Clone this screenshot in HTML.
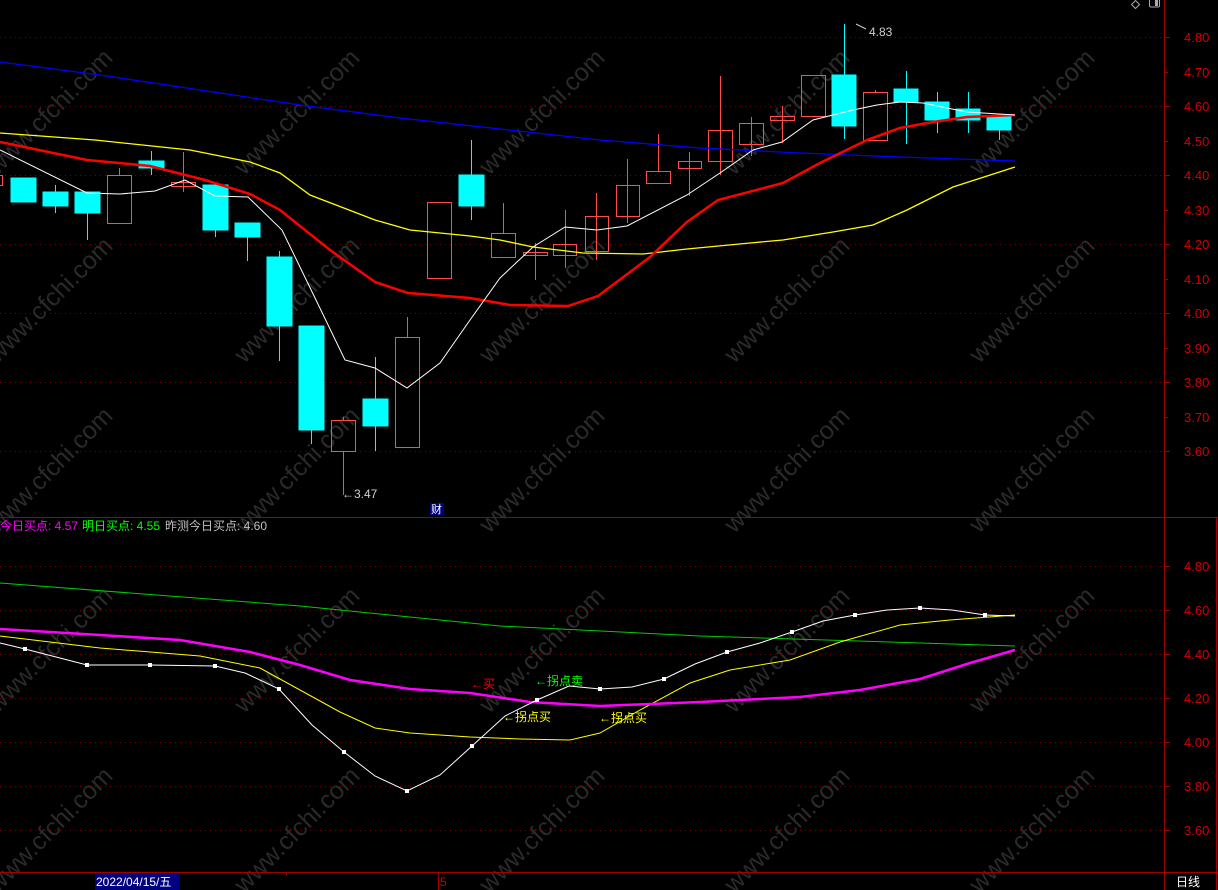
<!DOCTYPE html>
<html><head><meta charset="utf-8"><style>
html,body{margin:0;padding:0;background:#000;width:1218px;height:890px;overflow:hidden}
svg{display:block}
text{font-family:"Liberation Sans","Noto Sans CJK SC",sans-serif}
</style></head><body>
<svg width="1218" height="890" viewBox="0 0 1218 890" xmlns="http://www.w3.org/2000/svg">
<rect width="1218" height="890" fill="#000"/>
<!-- watermarks -->
<g fill="#2a2a2a" font-size="25" font-family="Liberation Sans,sans-serif">
<text transform="translate(50,112) rotate(-45)" text-anchor="middle" dy="8">www.cfchi.com</text>
<text transform="translate(297,112) rotate(-45)" text-anchor="middle" dy="8">www.cfchi.com</text>
<text transform="translate(542,112) rotate(-45)" text-anchor="middle" dy="8">www.cfchi.com</text>
<text transform="translate(787,112) rotate(-45)" text-anchor="middle" dy="8">www.cfchi.com</text>
<text transform="translate(1032,112) rotate(-45)" text-anchor="middle" dy="8">www.cfchi.com</text>
<text transform="translate(50,300) rotate(-45)" text-anchor="middle" dy="8">www.cfchi.com</text>
<text transform="translate(297,300) rotate(-45)" text-anchor="middle" dy="8">www.cfchi.com</text>
<text transform="translate(542,300) rotate(-45)" text-anchor="middle" dy="8">www.cfchi.com</text>
<text transform="translate(787,300) rotate(-45)" text-anchor="middle" dy="8">www.cfchi.com</text>
<text transform="translate(1032,300) rotate(-45)" text-anchor="middle" dy="8">www.cfchi.com</text>
<text transform="translate(50,470) rotate(-45)" text-anchor="middle" dy="8">www.cfchi.com</text>
<text transform="translate(297,470) rotate(-45)" text-anchor="middle" dy="8">www.cfchi.com</text>
<text transform="translate(542,470) rotate(-45)" text-anchor="middle" dy="8">www.cfchi.com</text>
<text transform="translate(787,470) rotate(-45)" text-anchor="middle" dy="8">www.cfchi.com</text>
<text transform="translate(1032,470) rotate(-45)" text-anchor="middle" dy="8">www.cfchi.com</text>
<text transform="translate(50,650) rotate(-45)" text-anchor="middle" dy="8">www.cfchi.com</text>
<text transform="translate(297,650) rotate(-45)" text-anchor="middle" dy="8">www.cfchi.com</text>
<text transform="translate(542,650) rotate(-45)" text-anchor="middle" dy="8">www.cfchi.com</text>
<text transform="translate(787,650) rotate(-45)" text-anchor="middle" dy="8">www.cfchi.com</text>
<text transform="translate(1032,650) rotate(-45)" text-anchor="middle" dy="8">www.cfchi.com</text>
<text transform="translate(50,830) rotate(-45)" text-anchor="middle" dy="8">www.cfchi.com</text>
<text transform="translate(297,830) rotate(-45)" text-anchor="middle" dy="8">www.cfchi.com</text>
<text transform="translate(542,830) rotate(-45)" text-anchor="middle" dy="8">www.cfchi.com</text>
<text transform="translate(787,830) rotate(-45)" text-anchor="middle" dy="8">www.cfchi.com</text>
<text transform="translate(1032,830) rotate(-45)" text-anchor="middle" dy="8">www.cfchi.com</text>
</g>
<!-- grid -->
<g stroke="#7a0000" stroke-width="1" stroke-dasharray="1,4">
<line x1="0" y1="37.5" x2="1162" y2="37.5"/><line x1="0" y1="106.5" x2="1162" y2="106.5"/>
<line x1="0" y1="175.5" x2="1162" y2="175.5"/><line x1="0" y1="244.5" x2="1162" y2="244.5"/>
<line x1="0" y1="313.5" x2="1162" y2="313.5"/><line x1="0" y1="382.5" x2="1162" y2="382.5"/>
<line x1="0" y1="451.5" x2="1162" y2="451.5"/>
<line x1="0" y1="566.5" x2="1162" y2="566.5"/><line x1="0" y1="610.5" x2="1162" y2="610.5"/>
<line x1="0" y1="654.5" x2="1162" y2="654.5"/><line x1="0" y1="698.5" x2="1162" y2="698.5"/>
<line x1="0" y1="742.5" x2="1162" y2="742.5"/><line x1="0" y1="786.5" x2="1162" y2="786.5"/>
<line x1="0" y1="830.5" x2="1162" y2="830.5"/>
</g>
<!-- frame -->
<g stroke="#a00000" stroke-width="1">
<line x1="1164.5" y1="0" x2="1164.5" y2="890"/>
<line x1="0" y1="517.5" x2="1218" y2="517.5"/>
<line x1="0" y1="872.5" x2="1218" y2="872.5"/>
<line x1="1216.5" y1="517" x2="1216.5" y2="890"/>
</g>
<g stroke="#a00000">
<line x1="1164" y1="37.5" x2="1170" y2="37.5"/><line x1="1164" y1="72.5" x2="1168" y2="72.5"/>
<line x1="1164" y1="106.5" x2="1170" y2="106.5"/><line x1="1164" y1="141.5" x2="1168" y2="141.5"/>
<line x1="1164" y1="175.5" x2="1170" y2="175.5"/><line x1="1164" y1="210.5" x2="1168" y2="210.5"/>
<line x1="1164" y1="244.5" x2="1170" y2="244.5"/><line x1="1164" y1="279.5" x2="1168" y2="279.5"/>
<line x1="1164" y1="313.5" x2="1170" y2="313.5"/><line x1="1164" y1="348.5" x2="1168" y2="348.5"/>
<line x1="1164" y1="382.5" x2="1170" y2="382.5"/><line x1="1164" y1="417.5" x2="1168" y2="417.5"/>
<line x1="1164" y1="451.5" x2="1170" y2="451.5"/>
<line x1="1164" y1="566.5" x2="1170" y2="566.5"/><line x1="1164" y1="610.5" x2="1170" y2="610.5"/>
<line x1="1164" y1="654.5" x2="1170" y2="654.5"/><line x1="1164" y1="698.5" x2="1170" y2="698.5"/>
<line x1="1164" y1="742.5" x2="1170" y2="742.5"/><line x1="1164" y1="786.5" x2="1170" y2="786.5"/>
<line x1="1164" y1="830.5" x2="1170" y2="830.5"/>
</g>
<g fill="#d00000" font-size="13">
<text x="1184" y="42">4.80</text><text x="1184" y="77">4.70</text><text x="1184" y="111">4.60</text>
<text x="1184" y="146">4.50</text><text x="1184" y="180">4.40</text><text x="1184" y="215">4.30</text>
<text x="1184" y="249">4.20</text><text x="1184" y="284">4.10</text><text x="1184" y="318">4.00</text>
<text x="1184" y="353">3.90</text><text x="1184" y="387">3.80</text><text x="1184" y="422">3.70</text>
<text x="1184" y="456">3.60</text>
<text x="1184" y="571">4.80</text><text x="1184" y="615">4.60</text><text x="1184" y="659">4.40</text>
<text x="1184" y="703">4.20</text><text x="1184" y="747">4.00</text><text x="1184" y="791">3.80</text>
<text x="1184" y="835">3.60</text>
</g>
<!-- top right icons -->
<path d="M1135.5 0.5 L1139.5 4.5 L1135.5 8.5 L1131.5 4.5 Z" fill="none" stroke="#aaa"/>
<rect x="1149.5" y="-2" width="10" height="9" rx="1.5" fill="none" stroke="#aaa"/>
<rect x="1155" y="0" width="3" height="6" fill="#aaa"/>

<!-- candles -->
<g stroke-width="1">
<g fill="#00ffff" stroke="#00ffff">
<rect x="11" y="178" width="25" height="24"/>
<line x1="55.5" y1="185" x2="55.5" y2="213"/><rect x="43" y="192" width="25" height="14"/>
<line x1="87.5" y1="192" x2="87.5" y2="240"/><rect x="75" y="192" width="25" height="21"/>
<line x1="151.5" y1="151" x2="151.5" y2="175"/><rect x="139" y="161" width="25" height="7"/>
<line x1="215.5" y1="185" x2="215.5" y2="237"/><rect x="203" y="185" width="25" height="45"/>
<line x1="247.5" y1="223" x2="247.5" y2="261"/><rect x="235" y="223" width="25" height="14"/>
<line x1="279.5" y1="251" x2="279.5" y2="361"/><rect x="267" y="257" width="25" height="69"/>
<line x1="311.5" y1="326" x2="311.5" y2="444"/><rect x="299" y="326" width="25" height="104"/>
<line x1="375.5" y1="357" x2="375.5" y2="451"/><rect x="363" y="399" width="25" height="27"/>
<line x1="471.5" y1="140" x2="471.5" y2="220"/><rect x="459" y="175" width="25" height="31"/>
<line x1="844.5" y1="24" x2="844.5" y2="139"/><rect x="832" y="75" width="24" height="51"/>
<line x1="906.5" y1="71" x2="906.5" y2="144"/><rect x="894" y="89" width="24" height="13"/>
<line x1="937.5" y1="92" x2="937.5" y2="133"/><rect x="925" y="102" width="24" height="18"/>
<line x1="968.5" y1="92" x2="968.5" y2="133"/><rect x="956" y="109" width="24" height="11"/>
<line x1="999.5" y1="116" x2="999.5" y2="140"/><rect x="987" y="116" width="24" height="14"/>
</g>
<g fill="none" stroke="#ff4d4d">
<rect x="-5.5" y="175.5" width="8" height="10"/>
<line x1="119.5" y1="168" x2="119.5" y2="175"/><rect x="107.5" y="175.5" width="24" height="48"/>
<line x1="183.5" y1="152" x2="183.5" y2="192"/><rect x="171.5" y="182.5" width="24" height="4"/>
<line x1="343.5" y1="417" x2="343.5" y2="420"/><line x1="343.5" y1="451" x2="343.5" y2="495"/><rect x="331.5" y="420.5" width="24" height="31"/>
<line x1="407.5" y1="317" x2="407.5" y2="337"/><rect x="395.5" y="337.5" width="24" height="110"/>
<rect x="427.5" y="202.5" width="24" height="76"/>
<line x1="503.5" y1="203" x2="503.5" y2="233"/><rect x="491.5" y="233.5" width="24" height="24"/>
<line x1="535.5" y1="243" x2="535.5" y2="280"/><rect x="523.5" y="252.5" width="24" height="3"/>
<line x1="565.5" y1="210" x2="565.5" y2="268"/><rect x="553.5" y="244.5" width="23" height="11"/>
<line x1="596.5" y1="193" x2="596.5" y2="260"/><rect x="585.5" y="216.5" width="23" height="35"/>
<line x1="627.5" y1="159" x2="627.5" y2="223"/><rect x="616.5" y="185.5" width="23" height="31"/>
<line x1="658.5" y1="134" x2="658.5" y2="171"/><rect x="646.5" y="171.5" width="24" height="12"/>
<line x1="689.5" y1="152" x2="689.5" y2="196"/><rect x="678.5" y="161.5" width="23" height="7"/>
<line x1="720.5" y1="76" x2="720.5" y2="175"/><rect x="708.5" y="130.5" width="24" height="31"/>
<line x1="751.5" y1="117" x2="751.5" y2="156"/><rect x="739.5" y="123.5" width="24" height="21"/>
<line x1="782.5" y1="106" x2="782.5" y2="143"/><rect x="770.5" y="116.5" width="24" height="4"/>
<rect x="801.5" y="75.5" width="24" height="41"/>
<line x1="875.5" y1="90" x2="875.5" y2="92"/><rect x="863.5" y="92.5" width="24" height="48"/>
</g>
</g>
<polyline fill="none" stroke="#0000ff" stroke-width="1.3" points="0,62 100,75 200,90 300,105 400,118 500,129 600,140 700,148 800,153 900,157 1015,161"/>
<polyline fill="none" stroke="#ffff00" stroke-width="1.3" points="0,133 95,140 190,150 250,162 280,173 310,195 375,220 410,230 470,236 500,240 533,247 583,253 643,254 687,249 750,243 783,240 833,232 873,225 907,210 953,187 1015,167"/>
<polyline fill="none" stroke="#ff0000" stroke-width="2.5" points="0,142 87,160 150,166 205,180 250,194 280,210 330,250 375,282 408,293 470,298 510,305 568,306 598,296 650,257 687,222 718,200 783,183 820,163 867,140 900,128 933,122 967,117 1015,115"/>
<polyline fill="none" stroke="#ffffff" stroke-width="1" points="0,150 87,193 120,194 155,191 185,180 215,196 248,197 282,230 316,300 345,360 375,368 407,388 440,363 470,320 500,278 533,247 565,227 597,230 627,226 687,195 720,173 753,150 782,142 813,120 853,110 877,105 900,102 923,103 947,108 967,112 1015,115"/>
<line x1="856" y1="24" x2="866" y2="29" stroke="#ccc"/>
<text x="869" y="36" fill="#d0d0d0" font-size="12">4.83</text>
<text x="342" y="498" fill="#d0d0d0" font-size="12">←3.47</text>
<rect x="430" y="503" width="14" height="12" fill="#000080"/>
<text x="431" y="513" fill="#fff" font-size="11">财</text>
<g font-size="12">
<text x="0" y="530" fill="#ff00ff">今日买点: 4.57</text>
<text x="82" y="530" fill="#00ff00">明日买点: 4.55</text>
<text x="165" y="530" fill="#c0c0c0">昨测今日买点: 4.60</text>
</g>
<polyline fill="none" stroke="#00cc00" stroke-width="1" points="0,583 300,606 500,626 700,636 1015,646"/>
<polyline fill="none" stroke="#ffff00" stroke-width="1" points="0,636 100,648 200,656 260,668 300,690 340,712 375,728 410,733 470,737 520,739 570,740 600,733 640,710 690,683 730,670 790,660 840,642 900,625 950,620 1015,615"/>
<polyline fill="none" stroke="#ff00ff" stroke-width="2.5" points="0,629 100,635 180,640 250,652 300,665 350,680 410,689 470,693 530,702 600,706 700,702 800,697 860,690 920,679 970,663 1015,650"/>
<polyline fill="none" stroke="#ffffff" stroke-width="1" points="0,643 25,649 87,665 150,665 215,666 245,673 279,689 312,725 344,752 375,776 407,791 440,775 472,746 505,716 537,700 569,686 600,689 632,687 664,679 695,664 727,652 760,643 792,632 823,621 855,615 887,610 920,608 952,610 985,615 1015,616"/>
<g fill="#fff">
<rect x="23" y="647" width="4" height="4"/><rect x="85" y="663" width="4" height="4"/><rect x="148" y="663" width="4" height="4"/>
<rect x="213" y="664" width="4" height="4"/><rect x="277" y="687" width="4" height="4"/><rect x="342" y="750" width="4" height="4"/>
<rect x="405" y="789" width="4" height="4"/><rect x="470" y="744" width="4" height="4"/><rect x="535" y="698" width="4" height="4"/>
<rect x="598" y="687" width="4" height="4"/><rect x="662" y="677" width="4" height="4"/><rect x="725" y="650" width="4" height="4"/>
<rect x="790" y="630" width="4" height="4"/><rect x="853" y="613" width="4" height="4"/><rect x="918" y="606" width="4" height="4"/>
<rect x="983" y="613" width="4" height="4"/>
</g>
<g font-size="12">
<text x="471" y="688" fill="#ff0000">←买</text>
<text x="535" y="685" fill="#00ff00">←拐点卖</text>
<text x="503" y="721" fill="#ffff00">←拐点买</text>
<text x="599" y="722" fill="#ffff00">←拐点买</text>
</g>
<rect x="95" y="873" width="85" height="17" fill="#000080"/>
<text x="96" y="886" fill="#fff" font-size="12">2022/04/15/五</text>
<line x1="286.5" y1="873" x2="286.5" y2="876" stroke="#a00000"/>
<line x1="438.5" y1="873" x2="438.5" y2="890" stroke="#a00000"/>
<text x="440" y="886" fill="#d00000" font-size="12">5</text>
<text x="1176" y="886" fill="#fff" font-size="12">日线</text>
</svg>
</body></html>
